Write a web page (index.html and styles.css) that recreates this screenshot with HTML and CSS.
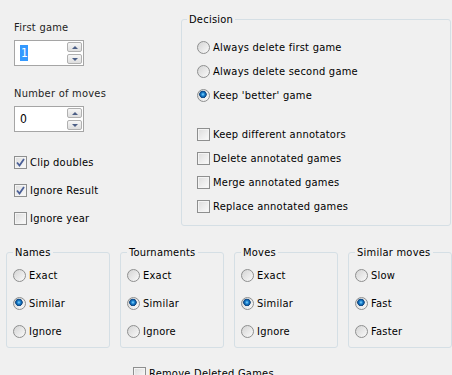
FILE: index.html
```html
<!DOCTYPE html>
<html lang="en">
<head>
  <meta charset="UTF-8">
  <title>Find Doubles</title>
  <link rel="stylesheet" href="styles.css">
</head>
<body>

<div class="dialog">
  <div class="top">
    <div class="left">
      <div class="field-label">First game</div>
      <div class="spin">
        <span class="spin-value"><span class="selected">1</span></span>
        <span class="spin-buttons">
          <span class="spin-btn"><span class="arrow up"></span></span>
          <span class="spin-btn"><span class="arrow down"></span></span>
        </span>
      </div>

      <div class="field-label second">Number of moves</div>
      <div class="spin">
        <span class="spin-value">0</span>
        <span class="spin-buttons">
          <span class="spin-btn"><span class="arrow up"></span></span>
          <span class="spin-btn"><span class="arrow down"></span></span>
        </span>
      </div>

      <div class="checks">
        <div class="row tall"><span class="cb checked"></span>Clip doubles</div>
        <div class="row tall"><span class="cb checked"></span>Ignore Result</div>
        <div class="row tall"><span class="cb"></span>Ignore year</div>
      </div>
    </div>

    <fieldset class="group decision">
      <legend>Decision</legend>
      <div class="row"><span class="radio"></span>Always delete first game</div>
      <div class="row"><span class="radio"></span>Always delete second game</div>
      <div class="row"><span class="radio on"></span>Keep 'better' game</div>
      <div class="spacer"></div>
      <div class="row"><span class="cb"></span>Keep different annotators</div>
      <div class="row"><span class="cb"></span>Delete annotated games</div>
      <div class="row"><span class="cb"></span>Merge annotated games</div>
      <div class="row"><span class="cb"></span>Replace annotated games</div>
    </fieldset>
  </div>

  <div class="bottom">
    <fieldset class="group small">
      <legend>Names</legend>
      <div class="row tall"><span class="radio"></span>Exact</div>
      <div class="row tall"><span class="radio on"></span>Similar</div>
      <div class="row tall"><span class="radio"></span>Ignore</div>
    </fieldset>
    <fieldset class="group small">
      <legend>Tournaments</legend>
      <div class="row tall"><span class="radio"></span>Exact</div>
      <div class="row tall"><span class="radio on"></span>Similar</div>
      <div class="row tall"><span class="radio"></span>Ignore</div>
    </fieldset>
    <fieldset class="group small">
      <legend>Moves</legend>
      <div class="row tall"><span class="radio"></span>Exact</div>
      <div class="row tall"><span class="radio on"></span>Similar</div>
      <div class="row tall"><span class="radio"></span>Ignore</div>
    </fieldset>
    <fieldset class="group small">
      <legend>Similar moves</legend>
      <div class="row tall"><span class="radio"></span>Slow</div>
      <div class="row tall"><span class="radio on"></span>Fast</div>
      <div class="row tall"><span class="radio"></span>Faster</div>
    </fieldset>
  </div>

  <div class="footer">
    <div class="row"><span class="cb"></span>Remove Deleted Games</div>
  </div>
</div>

</body>
</html>
```

FILE: styles.css
```css
html, body {
  margin: 0;
  height: 375px;
  overflow: hidden;
}
body {
  background: #f0f0f0;
  color: #000;
  font-family: "DejaVu Sans", sans-serif;
  font-stretch: condensed;
  font-size: 11px;
  line-height: 13px;
  letter-spacing: 0.25px;
}
.top {
  display: flex;
  align-items: flex-start;
}
.left {
  width: 167px;
  padding: 21px 0 0 14px;
}
.field-label {
  color: #1e1e1e;
}
.field-label.second {
  margin-top: 21px;
}
.spin {
  display: flex;
  align-items: center;
  justify-content: space-between;
  box-sizing: border-box;
  width: 70px;
  height: 26px;
  margin-top: 6px;
  padding: 0 1px 0 5px;
  border: 1px solid #a5a5a5;
  background: #fff;
}
.spin-value {
  font-size: 12px;
}
.selected {
  background: #3399ff;
  color: #fff;
  padding: 1px 0 1px 1px;
}
.spin-buttons {
  display: flex;
  flex-direction: column;
  gap: 2px;
}
.spin-btn {
  display: flex;
  align-items: center;
  justify-content: center;
  box-sizing: border-box;
  width: 15px;
  height: 10px;
  border: 1px solid #b0b0b0;
  border-radius: 2px;
  background: linear-gradient(#f6f6f6, #dedede);
}
.arrow {
  width: 0;
  height: 0;
  border-left: 3px solid transparent;
  border-right: 3px solid transparent;
}
.arrow.up {
  border-bottom: 3px solid #4c5f86;
}
.arrow.down {
  border-top: 3px solid #4c5f86;
}
.checks {
  margin-top: 16px;
}
.row {
  display: flex;
  align-items: center;
  height: 24px;
  white-space: nowrap;
}
.row.tall {
  height: 28px;
}
.cb, .radio {
  flex: none;
  box-sizing: border-box;
  width: 13px;
  height: 13px;
  margin-right: 3px;
  border: 1px solid #8e8f8f;
}
.cb {
  background: linear-gradient(135deg, #dcdcdc, #fbfbfb);
  box-shadow: inset 0 0 0 1px #f4f4f4;
}
.cb.checked {
  background: url("data:image/svg+xml,%3Csvg xmlns='http://www.w3.org/2000/svg' width='11' height='11'%3E%3Cpath d='M2 5.5 L4.5 8.5 L9 2' fill='none' stroke='%234a5f97' stroke-width='1.8'/%3E%3C/svg%3E") center no-repeat, linear-gradient(135deg, #dcdcdc, #fbfbfb);
}
.radio {
  border-radius: 50%;
  background: linear-gradient(135deg, #d4d4d4, #fafafa);
}
.radio.on {
  background: radial-gradient(circle at 45% 40%, #8fd8ff 0, #1f8ad6 1.5px, #0b4f94 3px, #1e4f80 3.5px, transparent 4px), linear-gradient(135deg, #d4d4d4, #fafafa);
}
.group {
  margin: 0;
  border: 1px solid #d5dfe5;
  border-radius: 3px;
  min-width: 0;
}
.group legend {
  padding: 0 2px;
  line-height: 13px;
}
.decision {
  box-sizing: border-box;
  width: 270px;
  margin-top: 13px;
  padding: 9px 0 7px 15px;
}
.decision legend {
  margin-left: -10px;
}
.spacer {
  height: 15px;
}
.bottom {
  display: grid;
  grid-template-columns: repeat(4, 104px);
  gap: 10px;
  margin: 14px 0 0 6px;
}
.small {
  box-sizing: border-box;
  padding: 2px 0 2px 6px;
}
.small legend {
  margin-left: 0;
}
.footer {
  margin-top: 17px;
  padding-left: 133px;
}
.footer .row {
  height: 16px;
}
```
